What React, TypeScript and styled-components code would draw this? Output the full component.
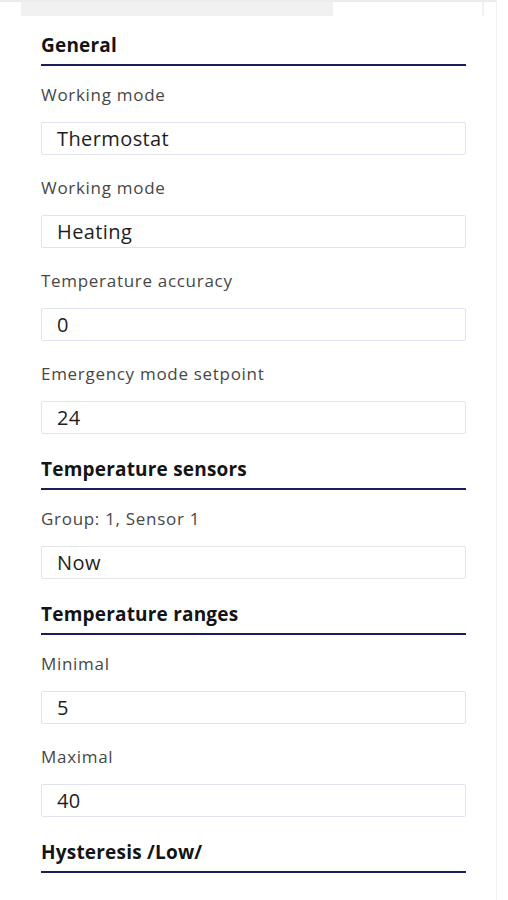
import React from 'react'
import styled, { createGlobalStyle } from 'styled-components'

const GlobalStyle = createGlobalStyle`
  html, body {
    margin: 0;
    padding: 0;
    background: #ffffff;
  }
  body {
    font-family: "Open Sans", "Liberation Sans", sans-serif;
  }
`

const Page = styled.div`
  width: 497px;
  min-height: 900px;
  border-right: 1px solid #f0f0f0;
  box-sizing: border-box;
`

const TopBar = styled.div`
  display: flex;
  height: 16px;
  border-top: 2px solid #ececec;
  box-sizing: border-box;
`

const Tab = styled.div`
  margin-left: 21px;
  width: 312px;
  background: #f1f1f1;
`

const TopDivider = styled.div`
  margin-left: auto;
  margin-right: 12px;
  width: 2px;
  background: #f2f2f2;
`

const Content = styled.div`
  display: flex;
  flex-direction: column;
  width: 425px;
  margin-left: 41px;
  padding-top: 17px;
`

const Heading = styled.h2<{ $first?: boolean }>`
  margin: ${(p) => (p.$first ? '0' : '23px')} 0 0;
  padding-bottom: 7px;
  border-bottom: 2px solid #1d1d5c;
  font-size: 19px;
  line-height: 24px;
  font-weight: 700;
  letter-spacing: 0.2px;
  color: #141414;
`

const Field = styled.div`
  display: flex;
  flex-direction: column;
  margin-top: 19px;

  & + & {
    margin-top: 23px;
  }
`

const Label = styled.div`
  font-size: 17px;
  line-height: 20px;
  letter-spacing: 0.7px;
  color: #474747;
`

const Input = styled.div`
  margin-top: 17px;
  height: 33px;
  box-sizing: border-box;
  border: 1px solid #e1e3f4;
  border-radius: 2px;
  padding-left: 15px;
  display: flex;
  align-items: center;
  font-size: 20px;
  letter-spacing: 0.4px;
  color: #1e1e1e;
`

type FieldData = { label: string; value: string }

const sections: { title: string; fields: FieldData[] }[] = [
  {
    title: 'General',
    fields: [
      { label: 'Working mode', value: 'Thermostat' },
      { label: 'Working mode', value: 'Heating' },
      { label: 'Temperature accuracy', value: '0' },
      { label: 'Emergency mode setpoint', value: '24' },
    ],
  },
  {
    title: 'Temperature sensors',
    fields: [{ label: 'Group: 1, Sensor 1', value: 'Now' }],
  },
  {
    title: 'Temperature ranges',
    fields: [
      { label: 'Minimal', value: '5' },
      { label: 'Maximal', value: '40' },
    ],
  },
  { title: 'Hysteresis /Low/', fields: [] },
]

const App: React.FC = () => (
  <Page>
    <GlobalStyle />
    <TopBar>
      <Tab />
      <TopDivider />
    </TopBar>
    <Content>
      {sections.map((s, i) => (
        <React.Fragment key={s.title}>
          <Heading $first={i === 0}>{s.title}</Heading>
          {s.fields.map((f, j) => (
            <Field key={j}>
              <Label>{f.label}</Label>
              <Input>{f.value}</Input>
            </Field>
          ))}
        </React.Fragment>
      ))}
    </Content>
  </Page>
)

export default App
